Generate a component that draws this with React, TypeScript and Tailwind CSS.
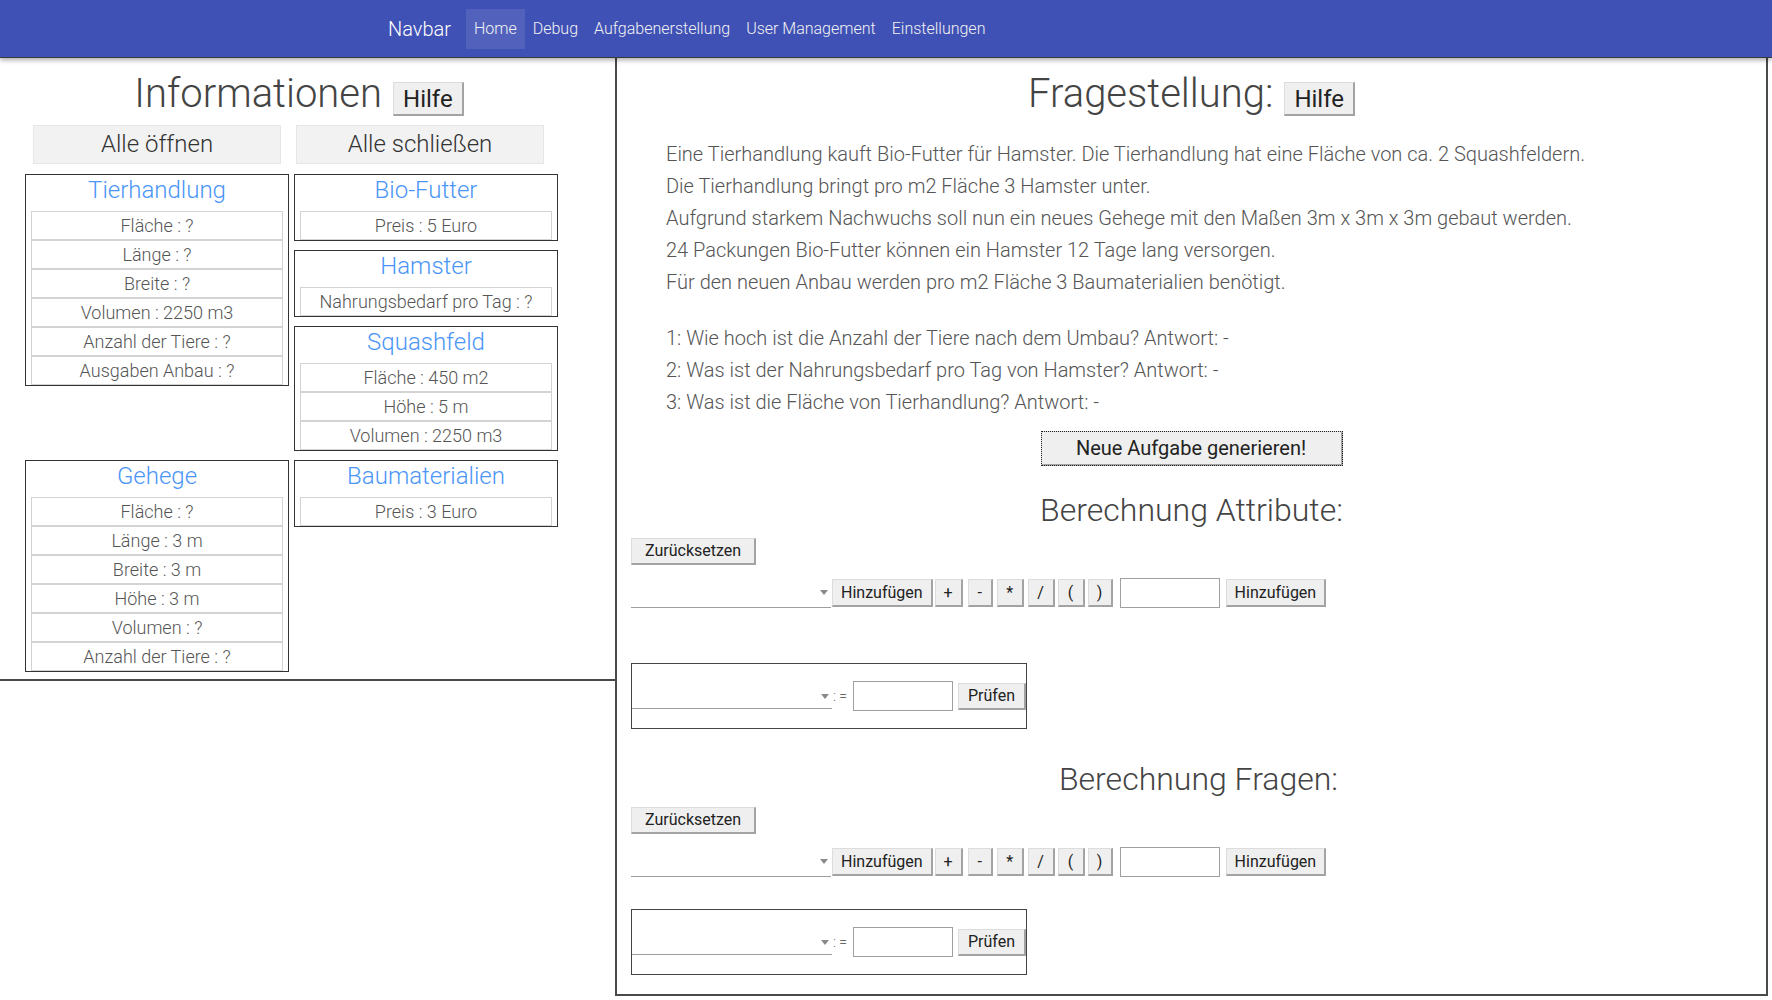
import React from 'react';

interface Entity {
    name: string;
    attrs: string[];
}

const tierhandlung: Entity = {
    name: 'Tierhandlung',
    attrs: ['Fläche : ?', 'Länge : ?', 'Breite : ?', 'Volumen : 2250 m3', 'Anzahl der Tiere : ?', 'Ausgaben Anbau : ?'],
};
const rightStack: Entity[] = [
    {name: 'Bio-Futter', attrs: ['Preis : 5 Euro']},
    {name: 'Hamster', attrs: ['Nahrungsbedarf pro Tag : ?']},
    {name: 'Squashfeld', attrs: ['Fläche : 450 m2', 'Höhe : 5 m', 'Volumen : 2250 m3']},
];
const gehege: Entity = {
    name: 'Gehege',
    attrs: ['Fläche : ?', 'Länge : 3 m', 'Breite : 3 m', 'Höhe : 3 m', 'Volumen : ?', 'Anzahl der Tiere : ?'],
};
const baumaterialien: Entity = {name: 'Baumaterialien', attrs: ['Preis : 3 Euro']};

const aufgabe = [
    'Eine Tierhandlung kauft Bio-Futter für Hamster. Die Tierhandlung hat eine Fläche von ca. 2 Squashfeldern.',
    'Die Tierhandlung bringt pro m2 Fläche 3 Hamster unter.',
    'Aufgrund starkem Nachwuchs soll nun ein neues Gehege mit den Maßen 3m x 3m x 3m gebaut werden.',
    '24 Packungen Bio-Futter können ein Hamster 12 Tage lang versorgen.',
    'Für den neuen Anbau werden pro m2 Fläche 3 Baumaterialien benötigt.',
];

const fragen = [
    '1: Wie hoch ist die Anzahl der Tiere nach dem Umbau? Antwort: -',
    '2: Was ist der Nahrungsbedarf pro Tag von Hamster? Antwort: -',
    '3: Was ist die Fläche von Tierhandlung? Antwort: -',
];

// default-ish browser button look
const btn = 'bg-[#efefef] border border-[#dcdcdc] border-r-2 border-b-2 border-r-[#a3a3a3] border-b-[#a3a3a3] text-[#222] font-normal leading-none';

const EntityCard: React.FC<{entity: Entity}> = ({entity}) => (
    <div className="w-[264px] border border-[#333] px-[5px]">
        <div className="h-[31px] mb-[5px] text-center text-[24px] leading-[31px] font-light text-[#4a95f7]">
            {entity.name}
        </div>
        {entity.attrs.map((a) => (
            <div key={a}
                 className="h-[29px] border border-[#d3d3d3] text-center text-[18px] leading-[27px] font-light text-[#555]">
                {a}
            </div>
        ))}
    </div>
);

const HilfeButton: React.FC = () => (
    <button className={`${btn} ml-[11px] mt-[10px] h-[34px] px-[9px] text-[24px]`}>Hilfe</button>
);

const SelectBox: React.FC<{className?: string}> = ({className}) => (
    <div className={`w-[200px] border-b border-[#9e9e9e] flex items-center justify-end pr-[3px] ${className ?? ''}`}>
        <div className="w-0 h-0 border-l-[4px] border-r-[4px] border-t-[5px] border-l-transparent border-r-transparent border-t-[#8a8a8a]"/>
    </div>
);

const ops: {label: string; w: string; ml: string}[] = [
    {label: '+', w: 'w-[28px]', ml: 'ml-[2px]'},
    {label: '-', w: 'w-[25px]', ml: 'ml-[5px]'},
    {label: '*', w: 'w-[27px]', ml: 'ml-[4px]'},
    {label: '/', w: 'w-[27px]', ml: 'ml-[4px]'},
    {label: '(', w: 'w-[27px]', ml: 'ml-[3px]'},
    {label: ')', w: 'w-[25px]', ml: 'ml-[3px]'},
];

interface BerechnungProps {
    title: string;
    titleClass: string;
    boxGap: string;
}

const Berechnung: React.FC<BerechnungProps> = ({title, titleClass, boxGap}) => (
    <>
        <h2 className={`${titleClass} h-[40px] text-center text-[32px] leading-[40px] font-light text-[#444]`}>{title}</h2>
        <button className={`${btn} mt-[8px] h-[27px] px-[13px] text-[16px]`}>Zurücksetzen</button>
        <div className="mt-[13px] flex items-end h-[30px]">
            <SelectBox className="h-[30px]"/>
            <button className={`${btn} ml-[1px] mb-[1px] h-[28px] px-[8px] text-[16px]`}>Hinzufügen</button>
            {ops.map((o) => (
                <button key={o.label}
                        className={`${btn} ${o.ml} ${o.w} mb-[1px] h-[28px] text-[16px]`}>{o.label}</button>
            ))}
            <input className="ml-[7px] w-[100px] h-[30px] border border-[#a0a0a0] bg-white outline-none"/>
            <button className={`${btn} ml-[6px] mb-[1px] h-[28px] px-[8px] text-[16px]`}>Hinzufügen</button>
        </div>
        <div className={`${boxGap} w-[396px] h-[66px] border border-[#444] flex items-center`}>
            <SelectBox className="h-[24px] mt-[1px]"/>
            <span className="ml-[1px] mr-[6px] text-[14px] text-[#666] font-light">: =</span>
            <input className="w-[100px] h-[30px] border border-[#a0a0a0] bg-white outline-none"/>
            <button className={`${btn} ml-[5px] h-[27px] px-[9px] text-[16px]`}>Prüfen</button>
        </div>
    </>
);

const App: React.FC = () => {
    return (
        <div className="min-h-screen bg-white font-['Roboto','Liberation_Sans',sans-serif]">
            {/* Navbar */}
            <nav className="relative z-10 h-[58px] bg-[#3f51b5] flex items-center border-b border-[#3a3a3a] shadow-[0_2px_5px_rgba(0,0,0,0.35)]">
                <span className="ml-[388px] text-[20px] text-white font-light">Navbar</span>
                <div className="ml-[15px] flex text-[16px] font-light text-[#f2f2f2]">
                    <a className="px-[8px] h-[40px] leading-[40px] bg-white/10">Home</a>
                    <a className="px-[8px] h-[40px] leading-[40px]">Debug</a>
                    <a className="px-[8px] h-[40px] leading-[40px]">Aufgabenerstellung</a>
                    <a className="px-[8px] h-[40px] leading-[40px]">User Management</a>
                    <a className="px-[8px] h-[40px] leading-[40px]">Einstellungen</a>
                </div>
            </nav>

            <div className="flex items-start">
                {/* Informationen */}
                <div className="w-[615px] shrink-0 border-b-2 border-[#4a4a4a] pl-[25px] pb-[7px]">
                    <div className="w-[548px]">
                        <div className="mt-[13px] h-[46px] flex items-center justify-center">
                            <h1 className="text-[40px] leading-[46px] font-light text-[#444]">Informationen</h1>
                            <HilfeButton/>
                        </div>
                        <div className="mt-[8px] ml-[8px] flex gap-[15px]">
                            <button className="w-[248px] h-[39px] pb-[9px] bg-[#f2f2f2] border border-[#e6e6e6] text-[24px] font-light text-[#333]">Alle öffnen</button>
                            <button className="w-[248px] h-[39px] pb-[9px] bg-[#f2f2f2] border border-[#e6e6e6] text-[24px] font-light text-[#333]">Alle schließen</button>
                        </div>
                        <div className="mt-[10px] flex items-start gap-[5px]">
                            <EntityCard entity={tierhandlung}/>
                            <div className="flex flex-col gap-[9px]">
                                {rightStack.map((e) => <EntityCard key={e.name} entity={e}/>)}
                            </div>
                        </div>
                        <div className="mt-[9px] flex items-start gap-[5px]">
                            <EntityCard entity={gehege}/>
                            <EntityCard entity={baumaterialien}/>
                        </div>
                    </div>
                </div>

                {/* Fragestellung */}
                <div className="flex-1 mr-[4px] border-l-2 border-r-2 border-b-2 border-[#4a4a4a] pl-[14px] pb-[19px]">
                    <div className="mt-[13px] h-[46px] flex items-center justify-center pr-[14px]">
                        <h1 className="text-[40px] leading-[46px] font-light text-[#444]">Fragestellung:</h1>
                        <HilfeButton/>
                    </div>
                    <div className="mt-[21px] ml-[35px] text-[20px] leading-[32px] font-light text-[#555]">
                        {aufgabe.map((l) => <p key={l}>{l}</p>)}
                    </div>
                    <div className="mt-[24px] ml-[35px] text-[20px] leading-[32px] font-light text-[#555]">
                        {fragen.map((l) => <p key={l}>{l}</p>)}
                    </div>
                    <div className="mt-[13px] flex justify-center pr-[14px]">
                        <button className={`${btn} w-[302px] h-[35px] text-[20px] outline-1 outline-dotted outline-[#222] -outline-offset-1`}>
                            Neue Aufgabe generieren!
                        </button>
                    </div>
                    <Berechnung title="Berechnung Attribute:" titleClass="mt-[24px] pr-[14px]" boxGap="mt-[55px]"/>
                    <Berechnung title="Berechnung Fragen:" titleClass="mt-[30px]" boxGap="mt-[32px]"/>
                </div>
            </div>
        </div>
    );
};

export default App;
